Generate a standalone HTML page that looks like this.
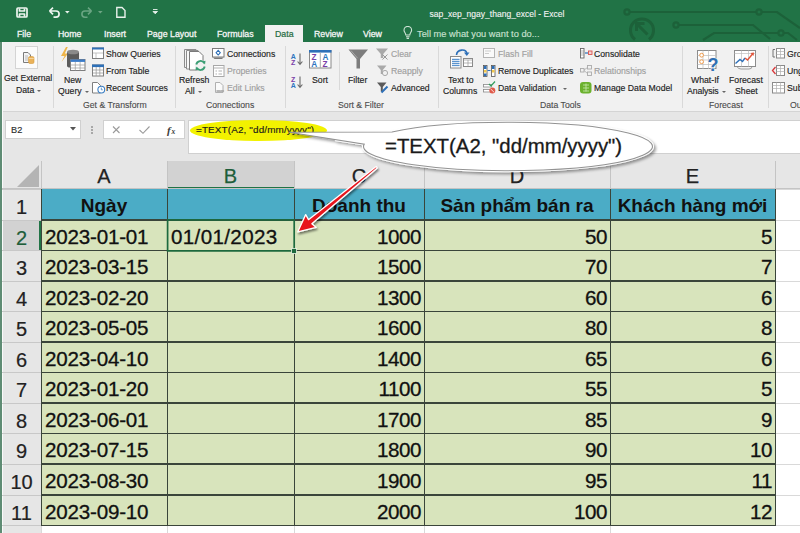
<!DOCTYPE html><html><head><meta charset="utf-8"><style>
*{margin:0;padding:0;box-sizing:border-box}
html,body{width:800px;height:533px;overflow:hidden;background:#fff;font-family:"Liberation Sans",sans-serif;position:relative}
.ab{position:absolute}
.t{position:absolute;white-space:nowrap;line-height:1}
.rb{font-size:8.7px;color:#1e1e1e;-webkit-text-stroke:0.15px #1e1e1e}
.gr{color:#a0a0a0;-webkit-text-stroke:0.15px #a0a0a0}
.lbl{font-size:8.7px;color:#4a4a4a;-webkit-text-stroke:0.1px #4a4a4a}
.tab{font-size:8.8px;color:#f4f4f4;-webkit-text-stroke:0.3px #f4f4f4}
.dd{display:inline-block;width:0;height:0;border-left:2.5px solid transparent;border-right:2.5px solid transparent;border-top:2.5px solid #666;vertical-align:middle;margin-left:0.5px;-webkit-text-stroke:0}
.cell{font-size:20.6px;letter-spacing:-0.2px;color:#111;-webkit-text-stroke:0.3px #111}
.sep{position:absolute;width:1px;background:#d9d9d9}

</style></head><body>
<div class="ab" style="left:0;top:0;width:800px;height:42px;background:#217346"></div>
<svg class="ab" style="left:600px;top:0" width="200" height="42" viewBox="600 0 200 42">
<g stroke="#1c6139" stroke-width="2.2" fill="none">
<path d="M630 12 H757 M761 12 H777 L800 28"/>
<circle cx="627" cy="12" r="2.6"/><circle cx="759" cy="12" r="2.6"/>
<path d="M679 25 H753 L770 39"/><circle cx="676" cy="25" r="2.6"/>
<path d="M703 40 L714 33 H778 M784 33 H788 L797 40"/><circle cx="781" cy="33" r="2.6"/>
<path d="M635 39.5 A11.5 11.5 0 1 1 649 39.5" stroke-width="3"/>
<path d="M636.5 23.5 L647.5 34.5 M636.5 22.5 V31 M635.5 23.5 H644.5" stroke-width="3"/>
</g></svg>
<svg class="ab" style="left:0;top:0" width="170" height="24">
<g fill="none" stroke="#eef5f0" stroke-width="1.7" stroke-linejoin="round">
<rect x="17" y="8" width="10" height="9" rx="1"/>
<path d="M19.5 8.5 V11 H24.5 V8.5 M19.5 16.8 V14 H24.5 V16.8"/>
<path d="M49.5 11 L53 7.6 M49.5 11 L53 14.4 M50 11 H56 A3.1 3.1 0 0 1 56 17.2 H53.5"/>
</g>
<g fill="none" stroke="#6aa583" stroke-width="1.6" stroke-linejoin="round">
<path d="M91.5 11 L88 7.6 M91.5 11 L88 14.4 M91 11 H85 A3.1 3.1 0 0 0 85 17.2 H87.5"/>
</g>
<path d="M65 11 h4.6 l-2.3 2.6z" fill="#e9f1ec"/>
<path d="M98 11 h4.6 l-2.3 2.6z" fill="#6fa585"/>
<path d="M116.8 7.5 H122 L125 10.5 V17.3 H116.8 Z" fill="none" stroke="#e9f1ec" stroke-width="1.4"/>
<path d="M153 9.5 h4.5 M153 11.5 h4.5 l-2.25 2.3z" fill="#e9f1ec" stroke="#e9f1ec" stroke-width="0.9"/>
</svg>
<div class="t" style="left:429.5px;top:10px;font-size:8.55px;color:#f4f4f4;-webkit-text-stroke:0.1px #f4f4f4">sap_xep_ngay_thang_excel - Excel</div>
<div class="ab" style="left:265px;top:25px;width:38px;height:17px;background:#f1f1f1"></div>
<div class="t tab" style="left:17px;top:30px">File</div>
<div class="t tab" style="left:58px;top:30px">Home</div>
<div class="t tab" style="left:104px;top:30px">Insert</div>
<div class="t tab" style="left:147px;top:30px">Page Layout</div>
<div class="t tab" style="left:217px;top:30px">Formulas</div>
<div class="t tab" style="left:314px;top:30px">Review</div>
<div class="t tab" style="left:363px;top:30px">View</div>
<div class="t tab" style="left:275px;top:30px;color:#1f6b41;-webkit-text-stroke:0.2px #1f6b41">Data</div>
<svg class="ab" style="left:402px;top:26px" width="12" height="14"><g fill="none" stroke="#cfe3d6" stroke-width="1.1">
<path d="M3.8 9 C3.8 7 2 6 2 4.2 A3.8 3.8 0 0 1 9.6 4.2 C9.6 6 7.8 7 7.8 9 Z"/><path d="M4 10.8 H7.6 M4.6 12.4 H7"/></g></svg>
<div class="t tab" style="left:417px;top:29.6px;color:#c8e0d0;-webkit-text-stroke:0.15px #c8e0d0;font-size:9.3px">Tell me what you want to do...</div>
<div class="ab" style="left:0;top:42px;width:800px;height:69px;background:#f1f1f1"></div>
<div class="ab" style="left:0;top:111px;width:800px;height:1px;background:#d4d4d4"></div>
<div class="sep" style="left:53px;top:46px;height:62px"></div>
<div class="sep" style="left:175px;top:46px;height:62px"></div>
<div class="sep" style="left:285px;top:46px;height:62px"></div>
<div class="sep" style="left:438px;top:46px;height:62px"></div>
<div class="sep" style="left:682px;top:46px;height:62px"></div>
<div class="sep" style="left:768px;top:46px;height:62px"></div>
<div class="sep" style="left:339px;top:52px;height:38px"></div>
<svg class="ab" style="left:0;top:0" width="800" height="112" viewBox="0 0 800 112">
<!-- Get External Data -->
<rect x="15.5" y="46.5" width="22" height="22" fill="#fbfbfb" stroke="#d4d4d4"/>
<path d="M23.5 52.5 H28 L30.5 55 V62.5 H23.5 Z" fill="#f4f4f4" stroke="#7b7b7b"/>
<path d="M25 56 h3 M25 58 h3 M25 60 h3" stroke="#aaa" stroke-width="0.8"/>
<rect x="28.5" y="56.5" width="5.5" height="7" rx="1.5" fill="#eab25a" stroke="#d59a3a" stroke-width="0.6"/>
<path d="M28.8 58.5 h5" stroke="#fbe3b8" stroke-width="0.7"/>
<!-- New Query -->
<path d="M66 47 L61 56 H64.5 L61.5 62 L68 53.5 H64.8 L67.8 47 Z" fill="#eeb54a"/>
<path d="M67 52 V66 C67 68.5 79 68.5 79 66 V52 Z" fill="#5c5c5c"/>
<ellipse cx="73" cy="52" rx="6" ry="2.3" fill="#8a8a8a"/>
<rect x="70.5" y="59.5" width="14.5" height="11" fill="#fff" stroke="#7d7d7d"/>
<rect x="70.5" y="59.5" width="14.5" height="2.4" fill="#3a7bc8"/>
<path d="M75.3 62 V70.5 M80.1 62 V70.5 M70.5 65 H85 M70.5 68 H85" stroke="#9a9a9a" stroke-width="0.7"/>
<!-- Show Queries -->
<rect x="92.5" y="48" width="11" height="10.5" fill="#fff" stroke="#7f7f7f"/>
<rect x="92" y="47.5" width="12" height="2" fill="#2e70b8"/>
<path d="M93 53 H103 M96 53 V58" stroke="#b5b5b5" stroke-width="0.8"/>
<!-- From Table -->
<rect x="92.5" y="65" width="11" height="11" fill="#fff" stroke="#7f7f7f"/>
<rect x="92" y="64.5" width="12" height="2.6" fill="#2e70b8"/>
<path d="M96.2 67 V76 M99.8 67 V76 M93 70 H103 M93 73 H103" stroke="#9d9d9d" stroke-width="0.8"/>
<!-- Recent Sources -->
<path d="M92.5 82.5 H97.5 L100.5 85.5 V93 H92.5 Z" fill="#fff" stroke="#7f7f7f"/>
<circle cx="101.3" cy="89.6" r="3.4" fill="#fff" stroke="#3b7fc4" stroke-width="1.1"/>
<path d="M101.3 87.6 V89.8 H102.8" stroke="#3b7fc4" stroke-width="0.8" fill="none"/>
<!-- Refresh All -->
<path d="M184.5 49.5 H196 V67.5 H184.5 Z" fill="#f3f3f3" stroke="#8c8c8c"/>
<path d="M186.5 50.5 H198 V69 H186.5 Z" fill="#f7f7f7" stroke="#8c8c8c"/>
<path d="M189.5 51.5 H199 L203 55.5 V70 H189.5 Z" fill="#fff" stroke="#7a7a7a"/>
<circle cx="200.5" cy="65.5" r="5.8" fill="#f1f1f1"/>
<path d="M196.3 64.5 A4.3 4.3 0 0 1 204.3 63.2 M204.7 66.5 A4.3 4.3 0 0 1 196.7 67.8" stroke="#3a9e74" stroke-width="1.8" fill="none"/>
<path d="M202.5 61.5 L205.5 60.8 L205 64.5 Z M198.5 69.5 L195.5 70.2 L196 66.5 Z" fill="#3a9e74"/>
<!-- Connections -->
<rect x="212.5" y="48.5" width="11.5" height="8.5" fill="#fff" stroke="#7a7a7a"/>
<path d="M213 57.5 H223.5 L222 59 H214.5 Z" fill="#7a7a7a"/>
<path d="M218.2 50.3 L220.3 52.7 L218.2 55 L216.1 52.7 Z" fill="#fff" stroke="#2e70b8" stroke-width="1.1"/>
<!-- Properties -->
<rect x="213.5" y="65.5" width="10.5" height="11" fill="#fff" stroke="#a8a8a8"/>
<path d="M214 68 H223.5 M215.5 71 h1.5 M218.5 71 h3.5 M215.5 74 h1.5 M218.5 74 h3.5" stroke="#a8a8a8" stroke-width="0.9"/>
<!-- Edit Links -->
<path d="M215.5 82.5 H220 L223 85.5 V92.5 H215.5 Z" fill="#fafafa" stroke="#b0b0b0"/>
<path d="M217 91 h2.6 M220.8 91 h2.6" stroke="#a0a0a0" stroke-width="1.6" stroke-linecap="round"/>
<!-- Sort AZ / ZA -->
<g font-family="Liberation Sans" font-weight="bold" font-size="7">
<text x="290.8" y="59" fill="#2e75c0">A</text><text x="291" y="65" fill="#7a3fa8">Z</text>
<text x="291" y="82" fill="#7a3fa8">Z</text><text x="290.8" y="88" fill="#2e75c0">A</text>
</g>
<path d="M300 53.5 V64 M297.6 61.5 L300 64.3 L302.4 61.5 M300 76.5 V87 M297.6 84.5 L300 87.3 L302.4 84.5" stroke="#6a6a6a" stroke-width="1.1" fill="none"/>
<!-- Sort big -->
<rect x="309.5" y="50.5" width="21.5" height="17.5" fill="#fff" stroke="#8a8a8a"/>
<rect x="309" y="50" width="22.5" height="2.6" fill="#2e70b8"/>
<path d="M320.3 52.5 V68" stroke="#aaa" stroke-width="1"/>
<g font-family="Liberation Sans" font-size="8.2" font-weight="bold">
<text x="311.5" y="60.2" fill="#7a3fa8">Z</text><text x="311.3" y="67.4" fill="#2e75c0">A</text>
<text x="322.4" y="60.2" fill="#2e75c0">A</text><text x="322.6" y="67.4" fill="#7a3fa8">Z</text>
</g>
<!-- Filter -->
<path d="M348.5 49.5 H368 L360 59 V68.5 H356.5 V59 Z" fill="#7d7d7d"/>
<path d="M351 50.6 L357.6 58.2" stroke="#bdbdbd" stroke-width="0.7"/>
<!-- Clear -->
<path d="M376 48.5 H388 L383.2 54 V58 H380.8 V54 Z" fill="#a9a9a9"/>
<path d="M382.5 54.5 L387.5 59.5 M387.5 54.5 L382.5 59.5" stroke="#9a9a9a" stroke-width="1"/>
<!-- Reapply -->
<path d="M377 65.5 H386.5 L382.8 70 V74 H380.8 V70 Z" fill="#a9a9a9"/>
<circle cx="385" cy="73" r="2.6" fill="none" stroke="#a9a9a9" stroke-width="1"/>
<!-- Advanced -->
<path d="M377 82.5 H386.5 L382.8 87 V91.5 H380.8 V87 Z" fill="#5a5a5a"/>
<path d="M381.5 92.5 L387.5 86.5" stroke="#2e70b8" stroke-width="2"/>
<!-- Text to Columns -->
<path d="M456.5 55 C457 49 466 48.5 466.8 53.5" stroke="#2e70b8" stroke-width="1.6" fill="none"/>
<path d="M464 52.5 L466.8 56 L469.5 52.5 Z" fill="#2e70b8"/>
<rect x="450.5" y="56.5" width="10.5" height="11.5" fill="#fff" stroke="#8a8a8a"/>
<rect x="452" y="58" width="7.5" height="8.5" fill="#d8e5f3"/>
<path d="M452 59.5 h7.5 M452 61.5 h7.5 M452 63.5 h7.5 M452 65.5 h7.5" stroke="#3b7fc4" stroke-width="0.8"/>
<rect x="463.5" y="58.5" width="9" height="8" fill="#fff" stroke="#8a8a8a"/>
<path d="M463.5 60 H472.5 M468 60 V66.5 M463.5 63 H472.5" stroke="#9a9a9a" stroke-width="0.7"/>
<!-- Flash Fill -->
<rect x="483.5" y="48.5" width="11" height="9" fill="#fafafa" stroke="#b5b5b5"/>
<path d="M485 51 h6 M485 53.5 h4" stroke="#c0c0c0" stroke-width="0.8"/>
<!-- Remove Duplicates -->
<rect x="483.5" y="65.5" width="3.5" height="11" fill="#fff" stroke="#555" stroke-width="0.8"/>
<rect x="484" y="66" width="2.5" height="3" fill="#2e70b8"/><rect x="484" y="70" width="2.5" height="2.5" fill="#f2c84b"/><rect x="484" y="73.5" width="2.5" height="2.5" fill="#2e70b8"/>
<rect x="491.5" y="65.5" width="3.5" height="11" fill="#fff" stroke="#555" stroke-width="0.8"/>
<rect x="492" y="66" width="2.5" height="3" fill="#2e70b8"/><rect x="492" y="70" width="2.5" height="2.5" fill="#f2c84b"/>
<path d="M487.5 70.5 h3" stroke="#2e70b8" stroke-width="1"/>
<!-- Data Validation -->
<rect x="483.5" y="84.5" width="8" height="2.5" fill="#fff" stroke="#8a8a8a" stroke-width="0.8"/>
<rect x="483.5" y="89.5" width="7" height="2.5" fill="#fff" stroke="#8a8a8a" stroke-width="0.8"/>
<path d="M489 84 L491 86 L495 81.5" stroke="#2f9e5a" stroke-width="1.2" fill="none"/>
<circle cx="492.3" cy="90.5" r="3" fill="#e05a4a"/>
<path d="M490.5 88.8 L494 92.2" stroke="#fff" stroke-width="0.8"/>
<!-- Consolidate -->
<rect x="580.5" y="48.5" width="3.5" height="9.5" fill="#fff" stroke="#666" stroke-width="0.9"/>
<path d="M581 51 h3 M581 53 h3 M581 55 h3" stroke="#888" stroke-width="0.6"/>
<path d="M585 53 h3" stroke="#2e70b8" stroke-width="1.2"/>
<rect x="588.5" y="51" width="3.5" height="3.5" fill="#f6d2d2" stroke="#d9534f" stroke-width="0.9"/>
<!-- Relationships -->
<rect x="580.5" y="68.5" width="3.5" height="3.5" fill="none" stroke="#ababab" stroke-width="0.9"/>
<rect x="587.5" y="65.5" width="4" height="3.5" fill="none" stroke="#ababab" stroke-width="0.9"/>
<rect x="587.5" y="72" width="4" height="3.5" fill="none" stroke="#ababab" stroke-width="0.9"/>
<path d="M584 70 L587.5 67.5 M584 70.5 L587.5 73.5" stroke="#ababab" stroke-width="0.8"/>
<!-- Manage Data Model -->
<rect x="580" y="82" width="11.5" height="11.5" rx="3" fill="#6bb12e"/>
<path d="M583 85 h6 M583 88 h6 M583 91 h6 M586 83.5 v8" stroke="#c9eab0" stroke-width="0.8"/>
<!-- What-If -->
<rect x="697.5" y="50.5" width="18.5" height="18" fill="#fff" stroke="#8c8c8c"/>
<path d="M697.5 55.5 H716 M697.5 60 H716 M697.5 64.5 H716 M703 50.5 V69 M708.5 50.5 V69" stroke="#bdbdbd" stroke-width="0.7"/>
<circle cx="701.6" cy="55.2" r="1.9" fill="#fff" stroke="#ef9b4d" stroke-width="1"/>
<circle cx="701.6" cy="61.7" r="1.9" fill="#fff" stroke="#ef9b4d" stroke-width="1"/>
<text x="707.6" y="70.8" font-family="Liberation Sans" font-weight="bold" font-size="18" fill="#2e6fb3" stroke="#f1f1f1" stroke-width="1" paint-order="stroke">?</text>
<!-- Forecast Sheet -->
<rect x="734.5" y="50.5" width="21" height="16" fill="#fff" stroke="#8c8c8c"/>
<path d="M734.5 53.5 H755.5 M741.5 50.5 V66.5 M748.5 50.5 V66.5" stroke="#bdbdbd" stroke-width="0.7"/>
<path d="M737 66.5 Q738 69 741 69 H749 Q752 69 752 66.5" stroke="#8c8c8c" fill="none" stroke-width="0.8"/>
<path d="M735.5 63.5 L740 59.5 L742.5 61.5 L745 58" stroke="#2e70b8" stroke-width="1.4" fill="none"/>
<path d="M745 58 L747.5 60 L753 53.5" stroke="#e0533a" stroke-width="1.4" fill="none"/>
<path d="M750.5 53 L754 52.5 L753.5 56 Z" fill="#e0533a"/>
<!-- Group / Ungroup / Subtotal -->
<rect x="776.5" y="48.5" width="8" height="9.5" fill="#fff" stroke="#8a8a8a"/>
<path d="M776.5 51.5 h8 M776.5 54.5 h8 M780.5 48.5 v9.5" stroke="#b0b0b0" stroke-width="0.7"/>
<path d="M775 49.5 H773 V57 H775" stroke="#666" fill="none" stroke-width="0.9"/>
<rect x="776.5" y="65.5" width="8" height="10" fill="#fff" stroke="#8a8a8a"/>
<path d="M776.5 68.5 h8 M776.5 71.5 h8 M780.5 65.5 v10" stroke="#b0b0b0" stroke-width="0.7"/>
<path d="M775.5 67 L772.5 70.5 L775.5 74" stroke="#d9373a" fill="none" stroke-width="1.3"/>
<rect x="772.5" y="82.5" width="12" height="10.5" fill="#fff" stroke="#8a8a8a"/>
<path d="M772.5 85.5 h12 M772.5 88.5 h12 M776.5 82.5 v10.5 M780.5 82.5 v10.5" stroke="#b0b0b0" stroke-width="0.7"/>
</svg>
<div class="t lbl" style="left:83px;top:101px;">Get &amp; Transform</div>
<div class="t lbl" style="left:206px;top:101px;">Connections</div>
<div class="t lbl" style="left:338px;top:101px;">Sort &amp; Filter</div>
<div class="t lbl" style="left:540px;top:101px;">Data Tools</div>
<div class="t lbl" style="left:709px;top:101px;">Forecast</div>
<div class="t lbl" style="left:790px;top:101px;">Ou</div>
<div class="t rb" style="left:4px;top:74px;">Get External</div>
<div class="t rb" style="left:16px;top:86px;">Data <i class="dd"></i></div>
<div class="t rb" style="left:64px;top:76px;">New</div>
<div class="t rb" style="left:58px;top:87px;">Query <i class="dd"></i></div>
<div class="t rb" style="left:106px;top:50px;">Show Queries</div>
<div class="t rb" style="left:106px;top:67px;">From Table</div>
<div class="t rb" style="left:106px;top:84px;">Recent Sources</div>
<div class="t rb" style="left:179px;top:76px;">Refresh</div>
<div class="t rb" style="left:185px;top:87px;">All <i class="dd"></i></div>
<div class="t rb" style="left:227px;top:50px;">Connections</div>
<div class="t rb gr" style="left:227px;top:67px;">Properties</div>
<div class="t rb gr" style="left:227px;top:84px;">Edit Links</div>
<div class="t rb" style="left:312px;top:76px;">Sort</div>
<div class="t rb" style="left:348px;top:76px;">Filter</div>
<div class="t rb gr" style="left:391px;top:50px;">Clear</div>
<div class="t rb gr" style="left:391px;top:67px;">Reapply</div>
<div class="t rb" style="left:391px;top:84px;">Advanced</div>
<div class="t rb" style="left:448px;top:76px;">Text to</div>
<div class="t rb" style="left:443px;top:87px;">Columns</div>
<div class="t rb gr" style="left:498px;top:50px;">Flash Fill</div>
<div class="t rb" style="left:498px;top:67px;">Remove Duplicates</div>
<div class="t rb" style="left:498px;top:84px;">Data Validation</div>
<div class="t rb" style="left:562px;top:84px;"><i class="dd"></i></div>
<div class="t rb" style="left:594px;top:50px;">Consolidate</div>
<div class="t rb gr" style="left:594px;top:67px;">Relationships</div>
<div class="t rb" style="left:594px;top:84px;">Manage Data Model</div>
<div class="t rb" style="left:691px;top:76px;">What-If</div>
<div class="t rb" style="left:687px;top:87px;letter-spacing:-0.1px">Analysis<i class="dd" style="margin-left:3px"></i></div>
<div class="t rb" style="left:729px;top:76px;">Forecast</div>
<div class="t rb" style="left:735px;top:87px;">Sheet</div>
<div class="t rb" style="left:787px;top:50px;">Group</div>
<div class="t rb" style="left:787px;top:67px;">Ungroup</div>
<div class="t rb" style="left:787px;top:84px;">Subtotal</div>
<div class="ab" style="left:0;top:112px;width:800px;height:49px;background:#e6e6e6"></div>
<div class="ab" style="left:5px;top:120px;width:76px;height:19px;background:#fff;border:1px solid #d0d0d0"></div>
<div class="t rb" style="left:11px;top:126px;font-size:9.2px;color:#333">B2</div>
<svg class="ab" style="left:70px;top:127px" width="8" height="5"><path d="M0 0h6l-3 3.5z" fill="#555"/></svg>
<div class="ab" style="left:91px;top:126px;width:1.5px;height:1.5px;background:#a8a8a8;box-shadow:0 3px 0 #a8a8a8,0 6px 0 #a8a8a8"></div>
<div class="ab" style="left:103px;top:120px;width:82px;height:19px;background:#fff;border:1px solid #d0d0d0"></div>
<svg class="ab" style="left:103px;top:120px" width="82" height="19"><g stroke="#9a9a9a" stroke-width="1.1" fill="none">
<path d="M10 6.5 L16.5 13 M16.5 6.5 L10 13"/><path d="M36.5 10 L40 13.3 L46.5 6.5"/></g>
<text x="64" y="13.5" font-family="Liberation Serif" font-style="italic" font-weight="bold" font-size="11" fill="#3a3a3a">f</text>
<text x="68.5" y="13.5" font-family="Liberation Serif" font-style="italic" font-weight="bold" font-size="7.5" fill="#3a3a3a">x</text></svg>
<div class="ab" style="left:188px;top:120px;width:612px;height:34px;background:#fff;border-left:1px solid #d0d0d0;border-top:1px solid #d0d0d0;border-bottom:1px solid #d0d0d0"></div>
<div class="ab" style="left:190px;top:120px;width:137px;height:21px;border-radius:50%;background:#f2f200"></div>
<div class="t rb" style="left:196px;top:125px;font-size:9.9px;letter-spacing:0.15px;color:#1a1a1a">=TEXT(A2, "dd/mm/yyyy")</div>
<div class="ab" style="left:2px;top:161px;width:798px;height:28px;background:#e6e6e6"></div>
<div class="ab" style="left:167px;top:161px;width:127px;height:28px;background:#d2d2d2"></div>
<div class="ab" style="left:167px;top:187px;width:128px;height:2px;background:#217346"></div>
<div class="ab" style="left:2px;top:189px;width:39px;height:344px;background:#e6e6e6"></div>
<div class="ab" style="left:2px;top:219.6px;width:39px;height:30.5px;background:#d2d2d2"></div>
<div class="ab" style="left:39px;top:219.6px;width:2px;height:30.5px;background:#217346"></div>
<div class="ab" style="left:0;top:42px;width:2px;height:491px;background:#5f8c74"></div><div class="ab" style="left:2px;top:42px;width:1px;height:491px;background:#fafafa"></div>
<svg class="ab" style="left:0;top:161px" width="42" height="28"><path d="M17 26 H39 V4 Z" fill="#b4b4b4"/></svg>
<div class="ab" style="left:41px;top:161px;width:1px;height:28px;background:#c4c4c4"></div>
<div class="ab" style="left:167px;top:161px;width:1px;height:28px;background:#c4c4c4"></div>
<div class="ab" style="left:294px;top:161px;width:1px;height:28px;background:#c4c4c4"></div>
<div class="ab" style="left:424px;top:161px;width:1px;height:28px;background:#c4c4c4"></div>
<div class="ab" style="left:610px;top:161px;width:1px;height:28px;background:#c4c4c4"></div>
<div class="ab" style="left:775px;top:161px;width:1px;height:28px;background:#c4c4c4"></div>
<div class="ab" style="left:800px;top:161px;width:1px;height:28px;background:#c4c4c4"></div>
<div class="ab" style="left:2px;top:188px;width:798px;height:1px;background:#c4c4c4"></div>
<div class="t" style="left:41px;width:126px;text-align:center;top:166px;font-size:20px;color:#222;-webkit-text-stroke:0.25px #222">A</div>
<div class="t" style="left:167px;width:127px;text-align:center;top:166px;font-size:20px;color:#1e5e3a;-webkit-text-stroke:0.25px #1e5e3a">B</div>
<div class="t" style="left:294px;width:130px;text-align:center;top:166px;font-size:20px;color:#222;-webkit-text-stroke:0.25px #222">C</div>
<div class="t" style="left:424px;width:186px;text-align:center;top:166px;font-size:20px;color:#222;-webkit-text-stroke:0.25px #222">D</div>
<div class="t" style="left:610px;width:165px;text-align:center;top:166px;font-size:20px;color:#222;-webkit-text-stroke:0.25px #222">E</div>
<div class="ab" style="left:2px;top:189.0px;width:39px;height:1px;background:#c8c8c8"></div>
<div class="ab" style="left:2px;top:219.6px;width:39px;height:1px;background:#c8c8c8"></div>
<div class="ab" style="left:2px;top:250.1px;width:39px;height:1px;background:#c8c8c8"></div>
<div class="ab" style="left:2px;top:280.6px;width:39px;height:1px;background:#c8c8c8"></div>
<div class="ab" style="left:2px;top:311.2px;width:39px;height:1px;background:#c8c8c8"></div>
<div class="ab" style="left:2px;top:341.8px;width:39px;height:1px;background:#c8c8c8"></div>
<div class="ab" style="left:2px;top:372.3px;width:39px;height:1px;background:#c8c8c8"></div>
<div class="ab" style="left:2px;top:402.9px;width:39px;height:1px;background:#c8c8c8"></div>
<div class="ab" style="left:2px;top:433.4px;width:39px;height:1px;background:#c8c8c8"></div>
<div class="ab" style="left:2px;top:463.9px;width:39px;height:1px;background:#c8c8c8"></div>
<div class="ab" style="left:2px;top:494.5px;width:39px;height:1px;background:#c8c8c8"></div>
<div class="ab" style="left:2px;top:525.0px;width:39px;height:1px;background:#c8c8c8"></div>
<div class="t" style="left:2px;width:39px;text-align:center;top:197.0px;font-size:20px;color:#222;-webkit-text-stroke:0.2px #222">1</div>
<div class="t" style="left:2px;width:39px;text-align:center;top:227.6px;font-size:20px;color:#1e5e3a;-webkit-text-stroke:0.2px #1e5e3a">2</div>
<div class="t" style="left:2px;width:39px;text-align:center;top:258.1px;font-size:20px;color:#222;-webkit-text-stroke:0.2px #222">3</div>
<div class="t" style="left:2px;width:39px;text-align:center;top:288.6px;font-size:20px;color:#222;-webkit-text-stroke:0.2px #222">4</div>
<div class="t" style="left:2px;width:39px;text-align:center;top:319.2px;font-size:20px;color:#222;-webkit-text-stroke:0.2px #222">5</div>
<div class="t" style="left:2px;width:39px;text-align:center;top:349.8px;font-size:20px;color:#222;-webkit-text-stroke:0.2px #222">6</div>
<div class="t" style="left:2px;width:39px;text-align:center;top:380.3px;font-size:20px;color:#222;-webkit-text-stroke:0.2px #222">7</div>
<div class="t" style="left:2px;width:39px;text-align:center;top:410.9px;font-size:20px;color:#222;-webkit-text-stroke:0.2px #222">8</div>
<div class="t" style="left:2px;width:39px;text-align:center;top:441.4px;font-size:20px;color:#222;-webkit-text-stroke:0.2px #222">9</div>
<div class="t" style="left:2px;width:39px;text-align:center;top:471.9px;font-size:20px;color:#222;-webkit-text-stroke:0.2px #222">10</div>
<div class="t" style="left:2px;width:39px;text-align:center;top:502.5px;font-size:20px;color:#222;-webkit-text-stroke:0.2px #222">11</div>
<div class="ab" style="left:41px;top:189px;width:734px;height:30.6px;background:#4bacc6"></div>
<div class="ab" style="left:41px;top:219.6px;width:734px;height:305.5px;background:#d8e4bc"></div>
<div class="ab" style="left:775px;top:189.0px;width:25px;height:1px;background:#d9d9d9"></div>
<div class="ab" style="left:775px;top:219.6px;width:25px;height:1px;background:#d9d9d9"></div>
<div class="ab" style="left:775px;top:250.1px;width:25px;height:1px;background:#d9d9d9"></div>
<div class="ab" style="left:775px;top:280.6px;width:25px;height:1px;background:#d9d9d9"></div>
<div class="ab" style="left:775px;top:311.2px;width:25px;height:1px;background:#d9d9d9"></div>
<div class="ab" style="left:775px;top:341.8px;width:25px;height:1px;background:#d9d9d9"></div>
<div class="ab" style="left:775px;top:372.3px;width:25px;height:1px;background:#d9d9d9"></div>
<div class="ab" style="left:775px;top:402.9px;width:25px;height:1px;background:#d9d9d9"></div>
<div class="ab" style="left:775px;top:433.4px;width:25px;height:1px;background:#d9d9d9"></div>
<div class="ab" style="left:775px;top:463.9px;width:25px;height:1px;background:#d9d9d9"></div>
<div class="ab" style="left:775px;top:494.5px;width:25px;height:1px;background:#d9d9d9"></div>
<div class="ab" style="left:775px;top:525.0px;width:25px;height:1px;background:#d9d9d9"></div>
<div class="ab" style="left:41px;top:525.0px;width:1px;height:10px;background:#d9d9d9"></div>
<div class="ab" style="left:167px;top:525.0px;width:1px;height:10px;background:#d9d9d9"></div>
<div class="ab" style="left:294px;top:525.0px;width:1px;height:10px;background:#d9d9d9"></div>
<div class="ab" style="left:424px;top:525.0px;width:1px;height:10px;background:#d9d9d9"></div>
<div class="ab" style="left:610px;top:525.0px;width:1px;height:10px;background:#d9d9d9"></div>
<div class="ab" style="left:41px;top:219.1px;width:735px;height:1.6px;background:#3a453a"></div>
<div class="ab" style="left:41px;top:249.6px;width:735px;height:1.6px;background:#3a453a"></div>
<div class="ab" style="left:41px;top:280.1px;width:735px;height:1.6px;background:#3a453a"></div>
<div class="ab" style="left:41px;top:310.7px;width:735px;height:1.6px;background:#3a453a"></div>
<div class="ab" style="left:41px;top:341.2px;width:735px;height:1.6px;background:#3a453a"></div>
<div class="ab" style="left:41px;top:371.8px;width:735px;height:1.6px;background:#3a453a"></div>
<div class="ab" style="left:41px;top:402.4px;width:735px;height:1.6px;background:#3a453a"></div>
<div class="ab" style="left:41px;top:432.9px;width:735px;height:1.6px;background:#3a453a"></div>
<div class="ab" style="left:41px;top:463.4px;width:735px;height:1.6px;background:#3a453a"></div>
<div class="ab" style="left:41px;top:494.0px;width:735px;height:1.6px;background:#3a453a"></div>
<div class="ab" style="left:41px;top:524.5px;width:735px;height:1.6px;background:#3a453a"></div>
<div class="ab" style="left:40.5px;top:189px;width:1.6px;height:336.0px;background:#3a453a"></div>
<div class="ab" style="left:166.5px;top:189px;width:1.6px;height:336.0px;background:#3a453a"></div>
<div class="ab" style="left:293.5px;top:189px;width:1.6px;height:336.0px;background:#3a453a"></div>
<div class="ab" style="left:423.5px;top:189px;width:1.6px;height:336.0px;background:#3a453a"></div>
<div class="ab" style="left:609.5px;top:189px;width:1.6px;height:336.0px;background:#3a453a"></div>
<div class="ab" style="left:774.5px;top:189px;width:1.6px;height:336.0px;background:#3a453a"></div>
<div class="t" style="left:41px;width:126px;text-align:center;top:196px;font-size:19px;font-weight:bold;color:#111">Ngày</div>
<div class="t" style="left:294px;width:130px;text-align:center;top:196px;font-size:19px;font-weight:bold;color:#111">Doanh thu</div>
<div class="t" style="left:424px;width:186px;text-align:center;top:196px;font-size:19px;font-weight:bold;color:#111">Sản phẩm bán ra</div>
<div class="t" style="left:610px;width:165px;text-align:center;top:196px;font-size:19px;font-weight:bold;color:#111">Khách hàng mới</div>
<div class="t cell" style="left:45px;top:226.6px">2023-01-01</div>
<div class="t cell" style="left:294px;width:127px;text-align:right;top:226.6px;letter-spacing:-0.45px">1000</div>
<div class="t cell" style="left:424px;width:183px;text-align:right;top:226.6px;letter-spacing:-0.45px">50</div>
<div class="t cell" style="left:610px;width:162px;text-align:right;top:226.6px;letter-spacing:-0.45px">5</div>
<div class="t cell" style="left:45px;top:257.1px">2023-03-15</div>
<div class="t cell" style="left:294px;width:127px;text-align:right;top:257.1px;letter-spacing:-0.45px">1500</div>
<div class="t cell" style="left:424px;width:183px;text-align:right;top:257.1px;letter-spacing:-0.45px">70</div>
<div class="t cell" style="left:610px;width:162px;text-align:right;top:257.1px;letter-spacing:-0.45px">7</div>
<div class="t cell" style="left:45px;top:287.6px">2023-02-20</div>
<div class="t cell" style="left:294px;width:127px;text-align:right;top:287.6px;letter-spacing:-0.45px">1300</div>
<div class="t cell" style="left:424px;width:183px;text-align:right;top:287.6px;letter-spacing:-0.45px">60</div>
<div class="t cell" style="left:610px;width:162px;text-align:right;top:287.6px;letter-spacing:-0.45px">6</div>
<div class="t cell" style="left:45px;top:318.2px">2023-05-05</div>
<div class="t cell" style="left:294px;width:127px;text-align:right;top:318.2px;letter-spacing:-0.45px">1600</div>
<div class="t cell" style="left:424px;width:183px;text-align:right;top:318.2px;letter-spacing:-0.45px">80</div>
<div class="t cell" style="left:610px;width:162px;text-align:right;top:318.2px;letter-spacing:-0.45px">8</div>
<div class="t cell" style="left:45px;top:348.8px">2023-04-10</div>
<div class="t cell" style="left:294px;width:127px;text-align:right;top:348.8px;letter-spacing:-0.45px">1400</div>
<div class="t cell" style="left:424px;width:183px;text-align:right;top:348.8px;letter-spacing:-0.45px">65</div>
<div class="t cell" style="left:610px;width:162px;text-align:right;top:348.8px;letter-spacing:-0.45px">6</div>
<div class="t cell" style="left:45px;top:379.3px">2023-01-20</div>
<div class="t cell" style="left:294px;width:127px;text-align:right;top:379.3px;letter-spacing:-0.45px">1100</div>
<div class="t cell" style="left:424px;width:183px;text-align:right;top:379.3px;letter-spacing:-0.45px">55</div>
<div class="t cell" style="left:610px;width:162px;text-align:right;top:379.3px;letter-spacing:-0.45px">5</div>
<div class="t cell" style="left:45px;top:409.9px">2023-06-01</div>
<div class="t cell" style="left:294px;width:127px;text-align:right;top:409.9px;letter-spacing:-0.45px">1700</div>
<div class="t cell" style="left:424px;width:183px;text-align:right;top:409.9px;letter-spacing:-0.45px">85</div>
<div class="t cell" style="left:610px;width:162px;text-align:right;top:409.9px;letter-spacing:-0.45px">9</div>
<div class="t cell" style="left:45px;top:440.4px">2023-07-15</div>
<div class="t cell" style="left:294px;width:127px;text-align:right;top:440.4px;letter-spacing:-0.45px">1800</div>
<div class="t cell" style="left:424px;width:183px;text-align:right;top:440.4px;letter-spacing:-0.45px">90</div>
<div class="t cell" style="left:610px;width:162px;text-align:right;top:440.4px;letter-spacing:-0.45px">10</div>
<div class="t cell" style="left:45px;top:470.9px">2023-08-30</div>
<div class="t cell" style="left:294px;width:127px;text-align:right;top:470.9px;letter-spacing:-0.45px">1900</div>
<div class="t cell" style="left:424px;width:183px;text-align:right;top:470.9px;letter-spacing:-0.45px">95</div>
<div class="t cell" style="left:610px;width:162px;text-align:right;top:470.9px;letter-spacing:-0.45px">11</div>
<div class="t cell" style="left:45px;top:501.5px">2023-09-10</div>
<div class="t cell" style="left:294px;width:127px;text-align:right;top:501.5px;letter-spacing:-0.45px">2000</div>
<div class="t cell" style="left:424px;width:183px;text-align:right;top:501.5px;letter-spacing:-0.45px">100</div>
<div class="t cell" style="left:610px;width:162px;text-align:right;top:501.5px;letter-spacing:-0.45px">12</div>
<div class="t cell" style="left:171px;top:226.6px;letter-spacing:0.35px">01/01/2023</div>
<svg class="ab" style="left:0;top:0" width="800" height="533"><rect x="167.6" y="219.9" width="126.6" height="31" fill="none" stroke="#1d6a3e" stroke-width="1.7"/><rect x="291.6" y="248.5" width="5" height="5" fill="#1d6a3e" stroke="#eef4e6" stroke-width="0.8"/></svg>
<svg class="ab" style="left:0;top:0" width="800" height="533">
<defs><filter id="sh" x="-20%" y="-50%" width="140%" height="200%"><feGaussianBlur in="SourceAlpha" stdDeviation="1.6"/><feOffset dx="1.5" dy="2.2"/><feComponentTransfer><feFuncA type="linear" slope="0.4"/></feComponentTransfer><feMerge><feMergeNode/><feMergeNode in="SourceGraphic"/></feMerge></filter></defs>
<g filter="url(#sh)">
<clipPath id="cp"><rect x="335" y="0" width="465" height="300"/></clipPath>
<path d="M289 132.3 L392 132.07 A144.5 24.2 0 1 1 364.2 144.12 Z" fill="#fff" stroke="#fff" stroke-width="3" clip-path="url(#cp)"/>
<path d="M289 132.3 L392 132.07 A144.5 24.2 0 1 1 364.2 144.12 Z" fill="#fff" stroke="#939393" stroke-width="1.1"/>
</g>
</svg>
<div class="t" style="left:385px;top:136px;font-size:20.4px;color:#1a1a1a;-webkit-text-stroke:0.3px #1a1a1a">=TEXT(A2, "dd/mm/yyyy")</div>
<svg class="ab" style="left:0;top:0" width="800" height="533">
<defs><filter id="sh2" x="-30%" y="-30%" width="160%" height="160%"><feGaussianBlur in="SourceAlpha" stdDeviation="1"/><feOffset dx="1" dy="1.5"/><feComponentTransfer><feFuncA type="linear" slope="0.5"/></feComponentTransfer><feMerge><feMergeNode/><feMergeNode in="SourceGraphic"/></feMerge></filter></defs>
<g filter="url(#sh2)">
<path d="M377.27 167.90 L311.81 223.69 L316.19 227.47 L297.80 231.80 L305.67 214.63 L308.51 219.67 L376.13 166.50 Z" fill="#e8141c" stroke="#fff" stroke-width="1.3" stroke-linejoin="round"/>
</g></svg>
</body></html>
